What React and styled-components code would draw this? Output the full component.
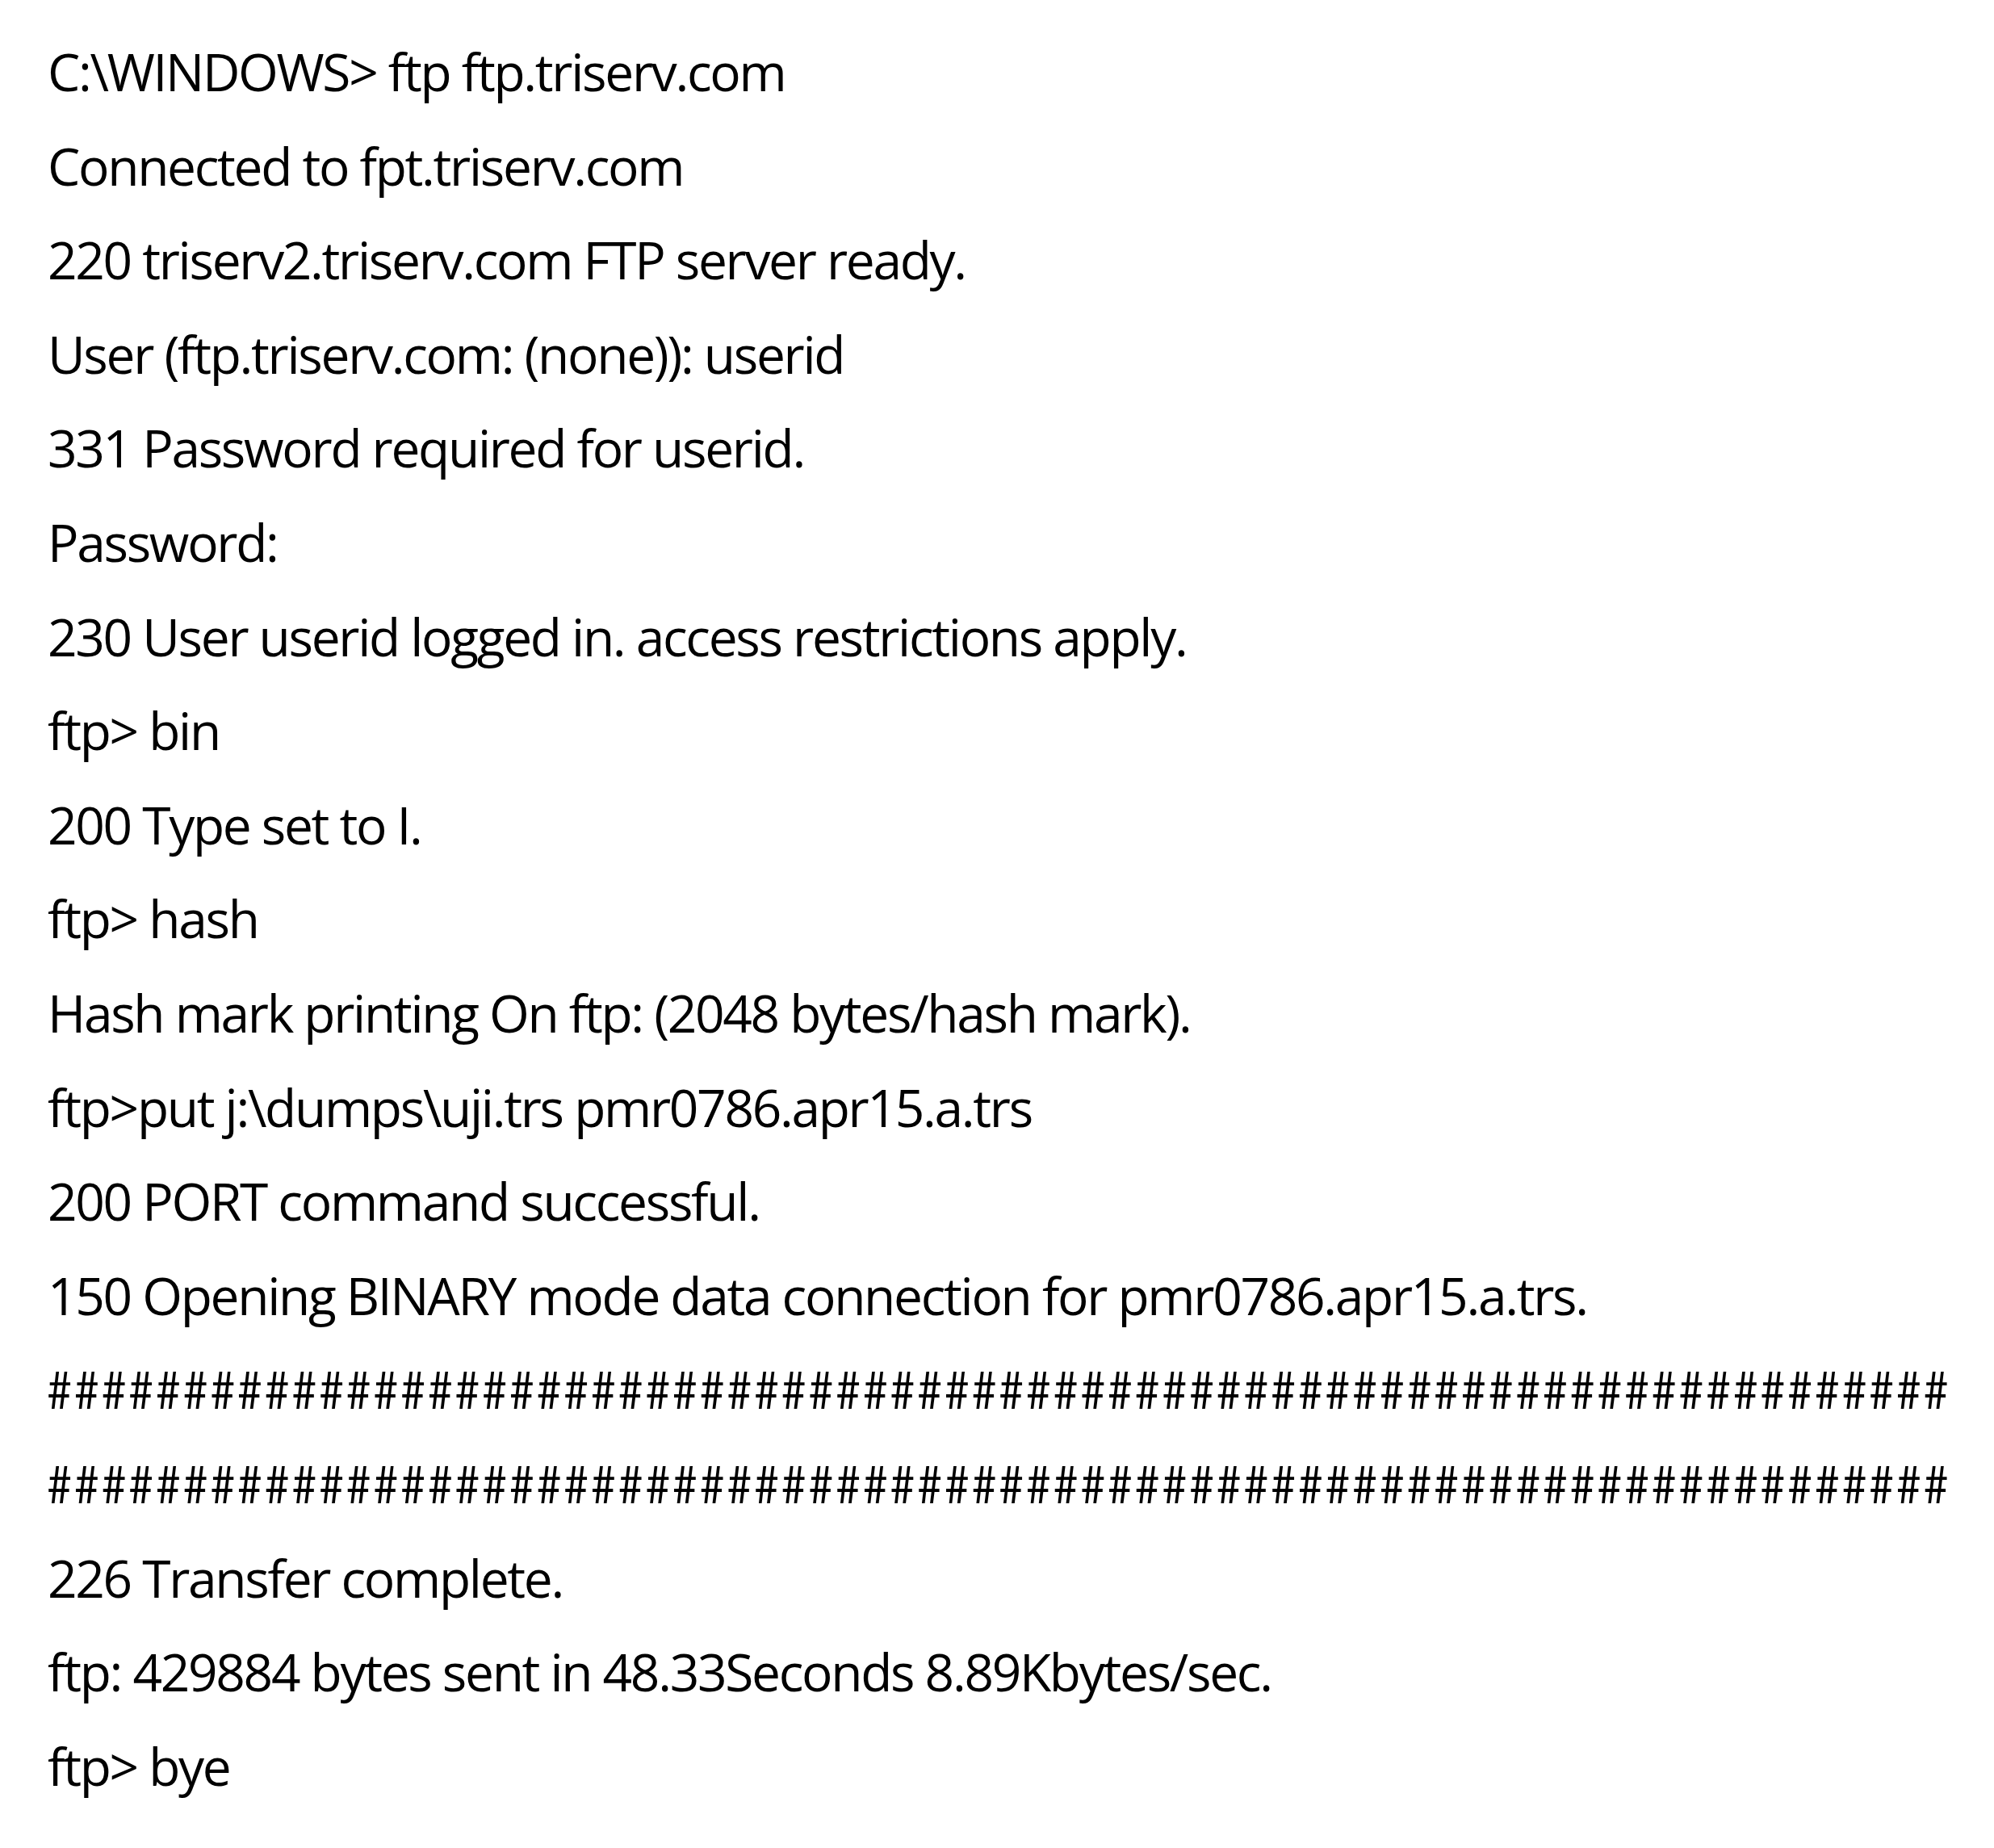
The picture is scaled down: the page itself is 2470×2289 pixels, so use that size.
import React from 'react';
import styled, { createGlobalStyle } from 'styled-components';

const GlobalStyle = createGlobalStyle`
  body {
    margin: 0;
    background: #fff;
  }
`;

const Transcript = styled.div`
  padding: 31px 0 0 59px;
  color: #000;
  font-family: "Open Sans", "Noto Sans", sans-serif;
`;

const Line = styled.div`
  font-size: 64px;
  line-height: 116.6px;
  letter-spacing: ${p => (p.$hash ? '4.5px' : '-2.3px')};
  font-stretch: ${p => (p.$hash ? 'condensed' : 'normal')};
  white-space: nowrap;
`;

const HASH_ROW = '#'.repeat(70);

const lines = [
  'C:\\WINDOWS> ftp ftp.triserv.com',
  'Connected to fpt.triserv.com',
  '220 triserv2.triserv.com FTP server ready.',
  'User (ftp.triserv.com: (none)): userid',
  '331 Password required for userid.',
  'Password:',
  '230 User userid logged in. access restrictions apply.',
  'ftp> bin',
  '200 Type set to I.',
  'ftp> hash',
  'Hash mark printing On ftp: (2048 bytes/hash mark).',
  'ftp>put j:\\dumps\\uji.trs pmr0786.apr15.a.trs',
  '200 PORT command successful.',
  '150 Opening BINARY mode data connection for pmr0786.apr15.a.trs.',
  HASH_ROW,
  HASH_ROW,
  '226 Transfer complete.',
  'ftp: 429884 bytes sent in 48.33Seconds 8.89Kbytes/sec.',
  'ftp> bye',
];

function App() {
  return (
    <>
      <GlobalStyle />
      <Transcript>
        {lines.map((text, i) => (
          <Line key={i} $hash={text === HASH_ROW}>{text}</Line>
        ))}
      </Transcript>
    </>
  );
}

export default App;
